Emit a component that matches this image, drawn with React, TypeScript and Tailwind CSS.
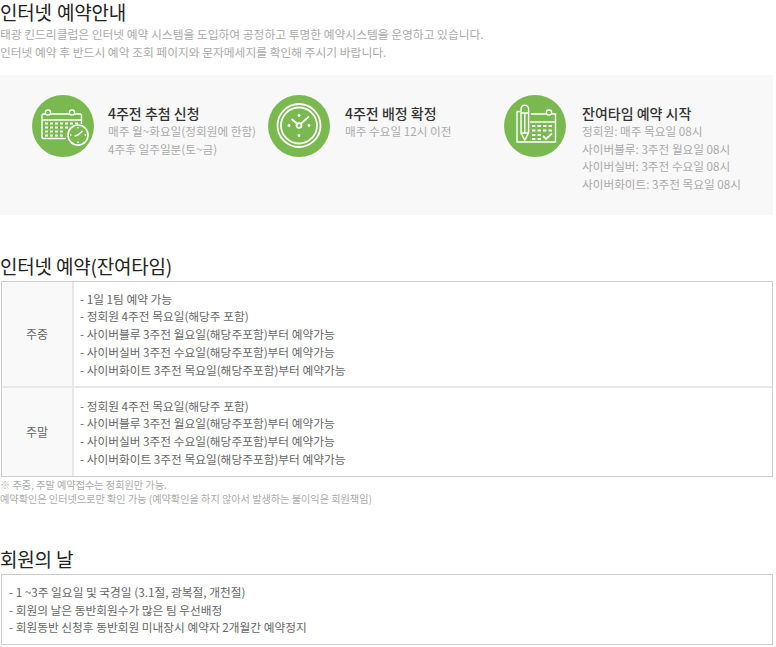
const FONT = "font-['Noto_Sans_CJK_KR','Liberation_Sans',sans-serif]";

const CalendarClockIcon = () => (
  <svg viewBox="0 0 62 62" className="w-[62px] h-[62px]" fill="none" stroke="#fff" strokeWidth="1.4">
    <circle cx="31" cy="31" r="31" fill="#7ab94f" stroke="none" />
    <path d="M10 20.5V42a1.5 1.5 0 0 0 1.5 1.5H34M10 20.5A1.5 1.5 0 0 1 11.5 19H13M19 19h18M43 19h5a1.5 1.5 0 0 1 1.5 1.5V29" />
    <path d="M10 25h39.5" />
    <circle cx="16" cy="17.5" r="2.6" />
    <circle cx="40" cy="17.5" r="2.6" />
    <path
      d="M13 28.5h3M18 28.5h3M23 28.5h3M28 28.5h3M33 28.5h3M38 28.5h3M43 28.5h3M13 32.5h3M18 32.5h3M23 32.5h3M28 32.5h3M33 32.5h3M13 36.5h3M18 36.5h3M23 36.5h3M28 36.5h3M13 40.5h3M18 40.5h3M23 40.5h3M28 40.5h3"
      strokeWidth="2.2"
    />
    <circle cx="46" cy="40" r="10" fill="#7ab94f" strokeWidth="1.6" />
    <path d="M46 40l4.5-4M46 40l-3.5 1" />
    <path d="M46 32v1.4M46 46.6V48M38 40h1.4M52.6 40H54" />
  </svg>
);

const ClockIcon = () => (
  <svg viewBox="0 0 62 62" className="w-[62px] h-[62px]" fill="none" stroke="#fff" strokeWidth="1.8">
    <circle cx="31" cy="31" r="31" fill="#7ab94f" stroke="none" />
    <circle cx="31" cy="30.5" r="21.5" />
    <circle cx="31" cy="30.5" r="18" />
    <circle cx="31" cy="30.5" r="2.4" />
    <path d="M29.3 28.8L23.5 24M32.8 28.8L41 21.5" />
    <g fill="#fff" stroke="none">
      <circle cx="31" cy="20.5" r="1.4" />
      <circle cx="31" cy="40.5" r="1.4" />
      <circle cx="21" cy="30.5" r="1.4" />
      <circle cx="41" cy="30.5" r="1.4" />
    </g>
  </svg>
);

const CalendarPencilIcon = () => (
  <svg viewBox="0 0 62 62" className="w-[62px] h-[62px]" fill="none" stroke="#fff" strokeWidth="1.4">
    <circle cx="31" cy="31" r="31" fill="#7ab94f" stroke="none" />
    <path d="M16 16.5h-3v30.5h38.5V19H48M42 19H27" />
    <circle cx="45" cy="17.5" r="2.6" />
    <path d="M26 27h25.5" />
    <path d="M17 14a3.8 3.8 0 0 1 7.6 0v24l-3.8 7-3.8-7z" fill="#7ab94f" />
    <path d="M17 18h7.6M20.8 18v20M17 38h7.6" />
    <path
      d="M28 31h3.4M33.5 31h3.4M39 31h3.4M44.5 31h3.4M28 35.5h3.4M33.5 35.5h3.4M39 35.5h3.4M44.5 35.5h3.4M28 40h3.4M33.5 40h3.4M28 44h3.4M33.5 44h3.4"
      strokeWidth="2.2"
    />
    <path d="M39 41l3 3 6-5.5" strokeWidth="1.9" />
  </svg>
);

const STEPS = [
  {
    icon: CalendarClockIcon,
    gap: "ml-[14px]",
    title: "4주전 추첨 신청",
    lines: ["매주 월~화요일(정회원에 한함)", "4주후 일주일분(토~금)"],
  },
  {
    icon: ClockIcon,
    gap: "ml-[15px]",
    title: "4주전 배정 확정",
    lines: ["매주 수요일 12시 이전"],
  },
  {
    icon: CalendarPencilIcon,
    gap: "ml-[16px]",
    title: "잔여타임 예약 시작",
    lines: [
      "정회원: 매주 목요일 08시",
      "사이버블루: 3주전 월요일 08시",
      "사이버실버: 3주전 수요일 08시",
      "사이버화이트: 3주전 목요일 08시",
    ],
  },
];

const WEEKDAY = [
  "- 1일 1팀 예약 가능",
  "- 정회원 4주전 목요일(해당주 포함)",
  "- 사이버블루 3주전 월요일(해당주포함)부터 예약가능",
  "- 사이버실버 3주전 수요일(해당주포함)부터 예약가능",
  "- 사이버화이트 3주전 목요일(해당주포함)부터 예약가능",
];

const WEEKEND = WEEKDAY.slice(1);

const MEMBER_DAY = [
  "- 1 ~3주 일요일 및 국경일 (3.1절, 광복절, 개천절)",
  "- 회원의 날은 동반회원수가 많은 팀 우선배정",
  "- 회원동반 신청후 동반회원 미내장시 예약자 2개월간 예약정지",
];

const Heading = ({ children }: { children: React.ReactNode }) => (
  <h2 className="text-[19px] leading-[24px] font-normal text-[#222] tracking-[-0.2px]">{children}</h2>
);

const Row = ({ label, lines, className }: { label: string; lines: string[]; className: string }) => (
  <div className={`flex ${className}`}>
    <div className="w-[72px] shrink-0 flex items-center justify-center bg-[#f9f9f9] border-r-2 border-[#e8e8e8] text-[12px] text-[#666]">
      {label}
    </div>
    <ul className="pl-[6px] flex flex-col justify-center text-[11.7px] leading-[17.7px] text-[#666]">
      {lines.map((line) => (
        <li key={line}>{line}</li>
      ))}
    </ul>
  </div>
);

export default function App() {
  return (
    <div className={`w-[776px] h-[647px] bg-white ${FONT}`}>
      <div className="w-[773px]">
        <h1 className="pt-[2px] font-['Liberation_Sans','Noto_Sans_CJK_KR',sans-serif] text-[19px] leading-[23px] font-normal text-[#222] tracking-[-0.2px]">
          인터넷 예약안내
        </h1>
        <div className="text-[11.75px] leading-[18px] text-[#aaa]">
          <p>태광 킨드리클럽은 인터넷 예약 시스템을 도입하여 공정하고 투명한 예약시스템을 운영하고 있습니다.</p>
          <p>인터넷 예약 후 반드시 예약 조회 페이지와 문자메세지를 확인해 주시기 바랍니다.</p>
        </div>

        <div className="mt-[14px] h-[140px] bg-[#f8f8f8] pl-[32px] pt-[20px] flex">
          {STEPS.map(({ icon: Icon, gap, title, lines }) => (
            <div key={title} className="w-[236px] flex">
              <div className="shrink-0">
                <Icon />
              </div>
              <div className={`${gap} pt-[9px] whitespace-nowrap`}>
                <h3 className="text-[14px] leading-[18px] font-medium text-[#333]">{title}</h3>
                <div className="text-[11.65px] leading-[17.7px] text-[#aaa]">
                  {lines.map((line) => (
                    <p key={line}>{line}</p>
                  ))}
                </div>
              </div>
            </div>
          ))}
        </div>

        <div className="mt-[39px]">
          <Heading>인터넷 예약(잔여타임)</Heading>
        </div>
        <div className="mt-[3px] ml-px border border-[#ccc]">
          <Row label="주중" lines={WEEKDAY} className="h-[106px] border-b-2 border-[#e8e8e8]" />
          <Row label="주말" lines={WEEKEND} className="h-[88px]" />
        </div>
        <div className="mt-[1px] text-[10.15px] leading-[14px] text-[#aaa]">
          <p>※ 주중, 주말 예약접수는 정회원만 가능.</p>
          <p>예약확인은 인터넷으로만 확인 가능 (예약확인을 하지 않아서 발생하는 불이익은 회원책임)</p>
        </div>

        <div className="mt-[41px]">
          <Heading>회원의 날</Heading>
        </div>
        <div className="mt-[3px] ml-px h-[71px] border border-[#ccc] pl-[7px] flex flex-col justify-center">
          <ul className="text-[11.7px] leading-[17.7px] text-[#666]">
            {MEMBER_DAY.map((line) => (
              <li key={line}>{line}</li>
            ))}
          </ul>
        </div>
      </div>
    </div>
  );
}
